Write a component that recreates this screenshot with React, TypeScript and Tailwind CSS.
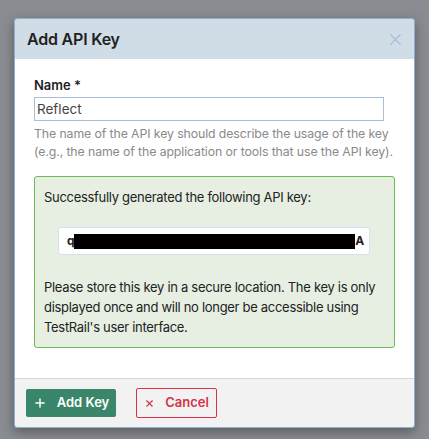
import { Plus, X } from "lucide-react";

const App = () => {
  return (
    <div className="w-[429px] h-[439px] bg-[#898c90] pt-[18px] pl-[14px] font-['Inter',sans-serif] overflow-hidden">
      <div className="w-[401px] border border-[#8fb0d4] rounded-[3px] shadow-[0_4px_12px_rgba(0,0,0,0.35)] overflow-hidden">
        <div className="h-[40px] bg-[#d0dce6] flex items-center justify-between pl-[12px] pr-[9px]">
          <h1 className="text-[16px] font-semibold text-[#222] tracking-[-0.2px]">Add API Key</h1>
          <X size={19} strokeWidth={1.4} className="text-[#a3bcd3]" />
        </div>
        <div className="bg-white pt-[18px] pb-[30px] pl-[19px] pr-[19px]">
          <label className="block text-[13px] font-semibold text-[#222] leading-[16px]">Name *</label>
          <div className="mt-[4px] w-[350px] h-[24px] border border-[#a9bfd3] flex items-center pl-[2px] text-[13.5px] text-[#444]">
            Reflect
          </div>
          <p className="mt-[4px] text-[12.3px] leading-[18px] text-[#8a8a8a] tracking-[-0.1px]">
            The name of the API key should describe the usage of the key (e.g., the name of the application or tools that use the API key).
          </p>
          <div className="mt-[15px] w-[361px] border border-[#6dbb54] rounded-[3px] bg-[#e6efe1] pl-[9px] pr-[6px] pt-[10px] pb-[10px] text-[13px] text-[#222] leading-[20px] tracking-[-0.3px]">
            <p>Successfully generated the following API key:</p>
            <div className="mt-[20px] ml-[14px] w-[312px] h-[28px] bg-white border border-[#d5e0ea] rounded-[3px] flex items-center pl-[8px] text-[12px] font-bold text-[#222]">
              <span>q</span>
              <span className="w-[281px] h-[15px] bg-black" />
              <span>A</span>
            </div>
            <p className="mt-[22px]">
              Please store this key in a secure location. The key is only displayed once and will no longer be accessible using TestRail's user interface.
            </p>
          </div>
        </div>
        <div className="bg-[#f2f2f2] border-t border-[#d6d6d6] h-[49px] flex items-center gap-[20px] pl-[11px]">
          <button className="h-[28px] w-[90px] bg-[#3a866a] rounded-[2px] text-white text-[13px] font-semibold flex items-center justify-center gap-[10px]">
            <Plus size={14} strokeWidth={2.5} />
            Add Key
          </button>
          <button className="h-[30px] w-[81px] border border-[#d8324a] rounded-[2px] text-[#d0344a] text-[13px] font-semibold flex items-center justify-center gap-[10px]">
            <X size={11} strokeWidth={2.5} />
            Cancel
          </button>
        </div>
      </div>
    </div>
  );
};

export default App;
